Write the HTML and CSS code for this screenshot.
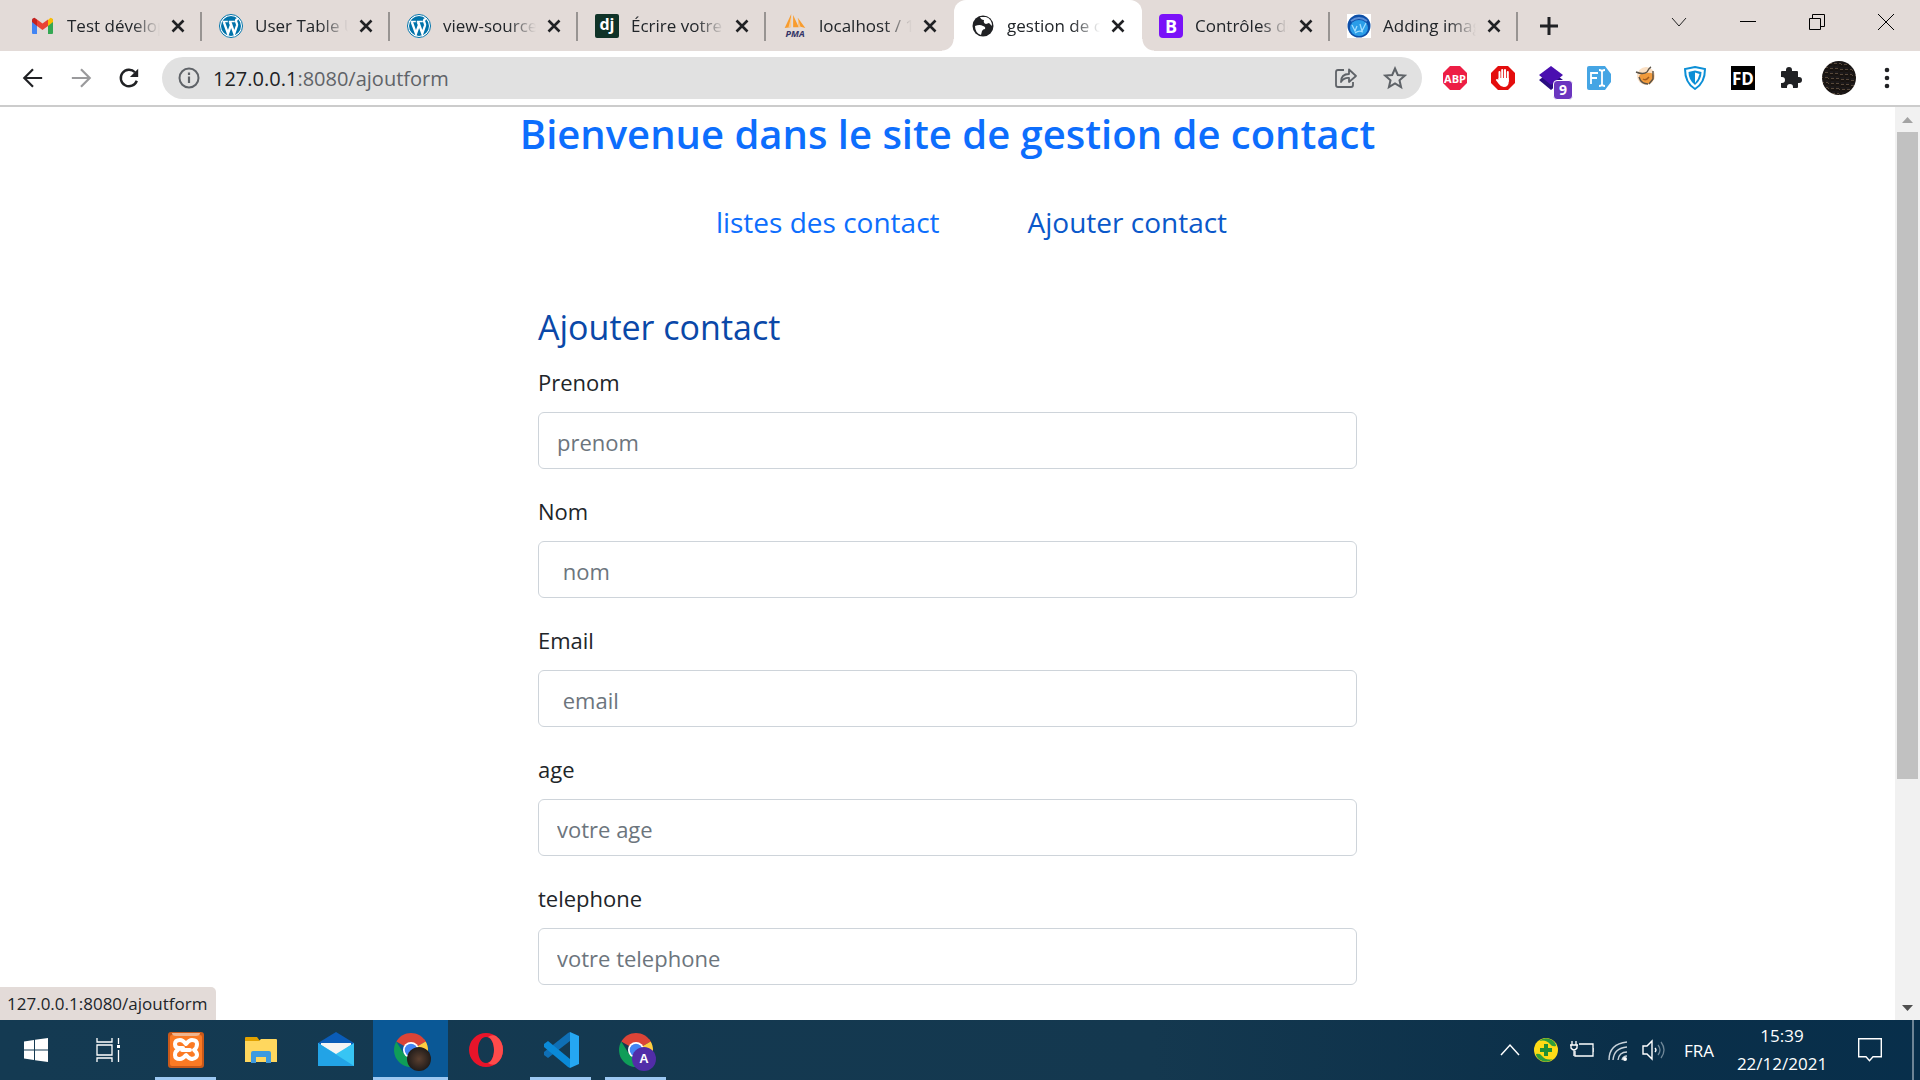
FILE: index.html
```
<!DOCTYPE html>
<html lang="fr">
<head>
<meta charset="utf-8">
<title>gestion de contact</title>
<link rel="stylesheet" href="styles.css">
</head>
<body>
<svg class="defs" aria-hidden="true">
  <symbol id="i-x" viewBox="0 0 14 14"><path d="M1.500 1.500 12.500 12.500M12.500 1.500 1.500 12.500" stroke="#202124" stroke-width="2.600"/></symbol>
  <symbol id="i-wp" viewBox="0 0 24 24"><circle cx="12" cy="12" r="11.500" fill="#fff" stroke="#0073aa"/><circle cx="12" cy="12" r="10" fill="#0073aa"/><path d="M3.600 7.500h5.200M9.800 7.500h6" stroke="#fff" stroke-width="1.300"/><path d="M4.800 8 9 19.500 12 11 10.800 8M11.300 8l4 11.500L18 11.500C18.600 9.500 17 8.500 17 7s1-2 2-1.800" fill="none" stroke="#fff" stroke-width="2.300"/></symbol>
  <symbol id="i-chrome" viewBox="0 0 36 36"><path d="M18 18 3.300 9.500A17 17 0 0 1 32.700 9.500Z" fill="#db4437"/><path d="M18 18 32.700 9.500A17 17 0 0 1 18 35Z" fill="#ffcd40"/><path d="M3.300 9.500A17 17 0 0 0 18 35L25 22 11 22Z" fill="#0f9d58"/><path d="M18 10H33L31 7H14Z" fill="#db4437"/><circle cx="18" cy="18" r="8" fill="#fff"/><circle cx="18" cy="18" r="6.300" fill="#4285f4"/></symbol>
</svg>

<header class="tabbar">
  <div class="tab">
    <svg class="fav" viewBox="0 0 24 24"><path d="M1 5v14q0 1 1 1h4V9z" fill="#4285f4"/><path d="M22 5v14q0 1-1 1h-4V9z" fill="#34a853"/><path d="M17 6v6l5-4V6q0-2-2.500-2.200z" fill="#fbbc04"/><path d="M6 5.500 11.500 9.500 17 5.500V12L11.500 16 6 12z" fill="#ea4335"/><path d="M1 6q0-2 2.500-2.200L6 5.500V12L1 8z" fill="#c5221f"/></svg>
    <span class="title">Test développeur</span><button class="close" aria-label="Fermer"><svg><use href="#i-x"/></svg></button>
  </div>
  <div class="tab">
    <svg class="fav"><use href="#i-wp"/></svg>
    <span class="title">User Table UI</span><button class="close" aria-label="Fermer"><svg><use href="#i-x"/></svg></button>
  </div>
  <div class="tab">
    <svg class="fav"><use href="#i-wp"/></svg>
    <span class="title">view-source:</span><button class="close" aria-label="Fermer"><svg><use href="#i-x"/></svg></button>
  </div>
  <div class="tab">
    <span class="fav fav-dj">dj</span>
    <span class="title">Écrire votre première</span><button class="close" aria-label="Fermer"><svg><use href="#i-x"/></svg></button>
  </div>
  <div class="tab tab-plain">
    <span class="fav fav-pma"><svg viewBox="0 0 24 16"><path d="M8 0 1 15 7 14zM10 1v13l6 0zM15 4l1 9 7 2z" fill="#f89c2e"/><path d="M8 2 5 14h3zM15 4l3 10h-2z" fill="#fbc98a"/></svg>PMA</span>
    <span class="title">localhost / 127</span><button class="close" aria-label="Fermer"><svg><use href="#i-x"/></svg></button>
  </div>
  <div class="tab active">
    <svg class="fav" viewBox="0 0 24 24"><circle cx="12" cy="12" r="10.500" fill="#202124"/><path d="M4 12q5-2 8 0 3 1 2 3-2 0-3 2l-1 4Q4 19 4 12zM9 3q1 3 4 3-1 3 2 4l3-1 3 3q0-7-6-9z" fill="#fff"/></svg>
    <span class="title">gestion de contact</span><button class="close" aria-label="Fermer"><svg><use href="#i-x"/></svg></button>
  </div>
  <div class="tab">
    <span class="fav fav-b">B</span>
    <span class="title">Contrôles de formulaire</span><button class="close" aria-label="Fermer"><svg><use href="#i-x"/></svg></button>
  </div>
  <div class="tab">
    <svg class="fav" viewBox="0 0 24 24"><path d="M0 0h24v24H0z" fill="#fff"/><circle cx="12" cy="12" r="11.500" fill="#0d4fa8"/><ellipse cx="12" cy="14" rx="9" ry="8" fill="#2a9de8"/><path d="M4 7q8-6 16 0" stroke="#5b8fd6" stroke-width="2" fill="none"/><path d="M5 11l3 6 2-5M13 10l2 7 4-8M8 19q4-3 8-1" stroke="#9ddcff" stroke-width="1.300" fill="none"/></svg>
    <span class="title">Adding images</span><button class="close" aria-label="Fermer"><svg><use href="#i-x"/></svg></button>
  </div>
  <button class="newtab" aria-label="Nouvel onglet"><svg viewBox="0 0 18 18"><path d="M9 0v18M0 9h18" stroke="#202124" stroke-width="3"/></svg></button>
  <div class="wincontrols">
    <button aria-label="Rechercher dans les onglets"><svg viewBox="0 0 16 16"><path d="M1 4l7 8 7-8" fill="none" stroke="#222"/></svg></button>
    <button aria-label="Réduire"><svg viewBox="0 0 16 16"><path d="M0 7.500h16" stroke="#000"/></svg></button>
    <button aria-label="Restaurer"><svg viewBox="0 0 16 16"><path d="M.500 4.500h11v11h-11zM3.500 4V.500h12v12H12" fill="none" stroke="#000"/></svg></button>
    <button aria-label="Quitter"><svg viewBox="0 0 16 16"><path d="M0 0l16 16M16 0 0 16" stroke="#000"/></svg></button>
  </div>
</header>

<nav class="toolbar">
  <button class="tool" aria-label="Précédent"><svg viewBox="0 0 24 24"><path d="M22 12H3M12 2.500 2.500 12 12 21.500" fill="none" stroke="#202124" stroke-width="2.400"/></svg></button>
  <button class="tool" aria-label="Suivant"><svg viewBox="0 0 24 24"><path d="M2 12h19M12 2.500 21.500 12 12 21.500" fill="none" stroke="#9a9a9c" stroke-width="2.400"/></svg></button>
  <button class="tool" aria-label="Actualiser"><svg viewBox="0 0 24 24"><path d="M20.500 15A9 9 0 1 1 18.500 5.700" fill="none" stroke="#202124" stroke-width="2.600"/><path d="M22 2v9h-9z" fill="#202124"/></svg></button>
  <div class="urlbar">
    <svg viewBox="0 0 24 24"><circle cx="12" cy="12" r="9.500" fill="none" stroke="#5f6368" stroke-width="2"/><path d="M12 10.500V17M12 6.500V9" stroke="#5f6368" stroke-width="2.200"/></svg>
    <span class="url"><b>127.0.0.1</b>:8080/ajoutform</span>
    <svg viewBox="0 0 24 24"><path d="M10 4H4Q2 4 2 6v13q0 2 2 2h13q2 0 2-2v-3" fill="none" stroke="#5f6368" stroke-width="1.800"/><path d="M7 16q0-8 8-8V3.500l7 6.500-7 6v-4Q10 11.500 7 16z" fill="none" stroke="#5f6368" stroke-width="1.800" stroke-linejoin="round"/></svg>
    <svg viewBox="0 0 24 24"><path d="M12 2.500 14.800 9l7 .600-5.300 4.700 1.600 6.900L12 17.500l-6.100 3.700 1.600-6.900L2.200 9.600l7-.600z" fill="none" stroke="#5f6368" stroke-width="2"/></svg>
  </div>
  <div class="extensions">
    <span class="ext"><svg viewBox="0 0 24 24"><path d="M7 0h10l7 7v10l-7 7H7l-7-7V7z" fill="#ed1e45"/></svg><span class="abp">ABP</span></span>
    <span class="ext"><svg viewBox="0 0 24 24"><path d="M7 0h10l7 7v10l-7 7H7l-7-7V7z" fill="#e40d0d"/><path d="M8.500 6v8M11.200 4v9M14 4v9M16.800 6v9" stroke="#fff" stroke-width="2" stroke-linecap="round"/><path d="M7.500 12h10.300v3q0 6-5 6-3 0-5-3l-3-4q1-2 2.700 0z" fill="#fff"/></svg></span>
    <span class="ext"><svg viewBox="0 0 24 24"><path d="M0 14 12 5l12 9-12 10z" fill="#2a0d80"/><path d="M0 9 12 0l12 9-12 10z" fill="#4a0fb0"/></svg><span class="count">9</span></span>
    <span class="ext"><svg viewBox="0 0 24 24"><path d="M2 0h16l6 8v8l-6 8H2q-2 0-2-2V2q0-2 2-2z" fill="#45a5e4"/><path d="M4 18V7h7M4 12h6M12 4q3 0 3 2v12q0 2-3 2M18 4q-3 0-3 2m0 12q0 2 3 2" fill="none" stroke="#fff" stroke-width="1.800"/></svg></span>
    <span class="ext"><svg viewBox="0 0 24 24"><circle cx="11" cy="10" r="9" fill="#fbe0c4"/><path d="M4 10q3-4 8-3 6-1 7 3 0 6-6 8-7 1-9-8z" fill="#f09a3c"/><path d="M1 6q7 3 11 0 2-4 4-5M4 11q2 7 9 7M18 5v8l-4 5" fill="none" stroke="#5b5348" stroke-width="1.400"/><path d="M8 13q3 2 6-2" fill="none" stroke="#a35b1c" stroke-width="1.400"/></svg></span>
    <span class="ext"><svg viewBox="0 0 24 24"><path d="M12 1 22 3q0 14-10 20Q2 17 2 3z" fill="#fff" stroke="#0c8fd6" stroke-width="2"/><path d="M12 4.500 18.500 6q0 8-6.500 13-6.500-5-6.500-13z" fill="#0c8fd6"/><path d="M12 7v10q-3 -4-4-9z" fill="#0c8fd6"/><path d="M12 6.500 16.500 8q-1 5-4.500 9z" fill="#fff"/></svg></span>
    <span class="ext fd">FD</span>
    <span class="ext"><svg viewBox="0 0 24 24"><path d="M7 4a3 3 0 0 1 6 0v1h5q1 0 1 1v5h1a3 3 0 0 1 0 6h-1v4q0 1-1 1h-4v-1a3 3 0 0 0-6 0v1H3q-1 0-1-1v-4h1a3 3 0 0 0 0-6H2V6q0-1 1-1h4z" fill="#202124"/></svg></span>
    <span class="ext"><span class="avatar"></span></span>
    <span class="ext"><svg viewBox="0 0 24 24"><circle cx="12" cy="4" r="2.300" fill="#202124"/><circle cx="12" cy="12" r="2.300" fill="#202124"/><circle cx="12" cy="20" r="2.300" fill="#202124"/></svg></span>
  </div>
</nav>

<div class="viewport">
  <main class="page">
    <h1>Bienvenue dans le site de gestion de contact</h1>
    <ul class="menu">
      <li><a href="#">listes des contact</a></li>
      <li><a class="hover" href="#">Ajouter contact</a></li>
    </ul>
    <form class="form">
      <h2>Ajouter contact</h2>
      <label for="prenom">Prenom</label>
      <input id="prenom" type="text" placeholder="prenom">
      <label for="nom">Nom</label>
      <input id="nom" type="text" placeholder="&nbsp;nom">
      <label for="email">Email</label>
      <input id="email" type="email" placeholder="&nbsp;email">
      <label for="age">age</label>
      <input id="age" type="text" placeholder="votre age">
      <label for="tel">telephone</label>
      <input id="tel" type="text" placeholder="votre telephone">
      <label for="lieu">lieu de travail</label>
      <input id="lieu" type="text">
    </form>
  </main>
  <div class="scrollbar">
    <svg viewBox="0 0 25 25"><path d="M7 16h11l-5.500-6z" fill="#a3a3a3"/></svg>
    <div class="track"><div class="thumb"></div></div>
    <svg viewBox="0 0 25 25"><path d="M7 10h11l-5.500 6z" fill="#505050"/></svg>
  </div>
  <div class="status">127.0.0.1:8080/ajoutform</div>
</div>

<footer class="taskbar">
  <button class="task sys" aria-label="Démarrer"><svg viewBox="0 0 24 24"><path d="M0 3.500 10 2v9.500H0zM11 1.800 24 0v11.500H11zM0 12.500h10V22L0 20.500zM11 12.500h13V24l-13-1.800z" fill="#fff"/></svg></button>
  <button class="task sys" aria-label="Affichage des tâches"><svg viewBox="0 0 24 24"><path d="M1 0v4h15V0M1 24v-4h15v4M1 7h15v10H1zM22.500 0v6M22.500 12v12" fill="none" stroke="#fff" stroke-width="1.300"/><path d="M21 7h3v3h-3z" fill="#fff"/></svg></button>
  <button class="task running" aria-label="XAMPP"><svg viewBox="0 0 36 36"><rect width="36" height="36" rx="3" fill="#c9591a"/><rect x="2" y="3" width="32" height="31" rx="2" fill="#fb7a24"/><path d="M4 1h28q0 3-4 3H8Q4 4 4 1z" fill="#f0b58e"/><path d="M15 16H11Q7 16 7 12t5-4q3 0 6 4 3-4 6-4 5 0 5 4t-3 6q3 2 3 5t-5 4q-3 0-6-4-3 4-6 4-5 0-5-4 0-4 3-5M14 18h8" fill="none" stroke="#fff" stroke-width="4" stroke-linecap="round" stroke-linejoin="round"/></svg></button>
  <button class="task" aria-label="Explorateur"><svg viewBox="0 0 36 36"><path d="M2 6q0-1 1-1h11l3 4v4H2z" fill="#e2a200"/><path d="M2 9h14l2-2h15q1 0 1 1v22H2z" fill="#ffd75e"/><path d="M8 31V21q0-2 2-2h16q2 0 2 2v10h-5v-6H13v6z" fill="#3d9ae0"/></svg></button>
  <button class="task" aria-label="Courrier"><svg viewBox="0 0 36 36"><path d="M0 11 18 0l18 11v6H0z" fill="#0a5cb8"/><path d="M3 11h30v2L18 24 3 13z" fill="#f4f4f4"/><path d="M0 11l18 11L36 11v23H0z" fill="#37c5f4"/><path d="M0 11l36 23H0z" fill="#22a3e6"/><path d="M3 11h30L18 21z" fill="#f4f4f4"/></svg></button>
  <button class="task current" aria-label="Chrome"><svg><use href="#i-chrome"/></svg><span class="badge photo"></span></button>
  <button class="task" aria-label="Opera"><svg viewBox="0 0 36 36"><path fill-rule="evenodd" d="M18 1a17 17 0 1 1 0 34 17 17 0 0 1 0-34zm0 4c-5 0-8 6-8 13s3 13 8 13 8-6 8-13-3-13-8-13z" fill="#e8142a"/><path d="M20 5c8 3 8 23 0 26q4 3 8 1 7-5 7-14T28 4q-4-2-8 1z" fill="#ff4b4b"/></svg></button>
  <button class="task running" aria-label="Visual Studio Code"><svg viewBox="0 0 36 36"><path d="M27 9 5 26l-4-3v-3L25 1l2-1z" fill="#0f6fb5"/><path d="M27 27 5 9 1 12v3l24 20 2 1z" fill="#0a8ad8"/><path d="M27 0 36 4v28l-9 4z" fill="#25a7f2"/></svg></button>
  <button class="task running" aria-label="Chrome, profil A"><svg><use href="#i-chrome"/></svg><span class="badge">A</span></button>
  <div class="tray">
    <svg viewBox="0 0 24 24"><path d="M3 17l9-10 9 10" fill="none" stroke="#fff" stroke-width="1.500"/></svg>
    <svg viewBox="0 0 24 24"><circle cx="12" cy="12" r="12" fill="#fddb16"/><path d="M5 3Q11-2 18 2q4 3 4 6-4 1-6-2Q12 1 5 3zM19 21q-6 5-13 1-4-3-4-6 4-1 6 2 4 5 11 3z" fill="#2f9e3a"/><path d="M12 6v12M6 12h12" stroke="#1f8f35" stroke-width="4"/></svg>
    <svg viewBox="0 0 24 24"><path d="M9 6h14v12H5v-5" fill="none" stroke="#fff" stroke-width="1.300"/><path d="M24 10v4M2 3v4M6 3v4M0 7h8M1 7v3q3 4 6 0V7M4 12v6" fill="none" stroke="#fff" stroke-width="1.300"/></svg>
    <svg viewBox="0 0 24 24"><path d="M3 22Q3 6 21 4M7 22Q8 10 21 9M12 22q1-8 9-8M16 22q1-4 5-4" fill="none" stroke="#c8d2da" stroke-width="1.400"/><circle cx="19" cy="21" r="2" fill="#fff"/></svg>
    <svg viewBox="0 0 24 24"><path d="M1 8h4l5-5v18l-5-5H1z" fill="none" stroke="#fff" stroke-width="1.400"/><path d="M13 10q2 2 0 4" fill="none" stroke="#fff" stroke-width="1.300"/><path d="M16 7q4 5 0 10M19 4q6 8 0 16" fill="none" stroke="#6f8798" stroke-width="1.300"/></svg>
    <span class="lang">FRA</span>
    <span class="clock">15:39<br>22/12/2021</span>
    <svg class="notif" viewBox="0 0 24 24"><path d="M.700.700h22.600v18H15l-3.500 4-3.500-4H.700z" fill="none" stroke="#fff" stroke-width="1.400"/></svg>
    <span class="desk"></span>
  </div>
</footer>
</body>
</html>
```
FILE: styles.css
```
* { box-sizing: border-box; }

body {
  margin: 0;
  height: 100vh;
  display: flex;
  flex-direction: column;
  overflow: hidden;
  font-family: "Open Sans", "Noto Sans", sans-serif;
  font-size: 22px;
  color: #212529;
  background: #fff;
}

button {
  border: 0;
  padding: 0;
  background: none;
  display: flex;
  align-items: center;
  justify-content: center;
}

svg { display: block; }
.defs { display: none; }

/* tab strip */
.tabbar {
  display: flex;
  flex: none;
  height: 51px;
  padding-left: 14px;
  background: #e3dbd8;
}
.tab {
  position: relative;
  display: flex;
  align-items: center;
  width: 188px;
  padding: 0 17px;
}
.tab::after {
  content: "";
  position: absolute;
  right: 0;
  top: 12px;
  width: 2px;
  height: 29px;
  background: #989492;
}
.tab-plain::after { display: none; }
.tab.active {
  background: #fff;
  border-radius: 12px 12px 0 0;
}
.tab.active::before,
.tab.active::after {
  content: "";
  position: absolute;
  top: auto;
  bottom: 0;
  width: 12px;
  height: 12px;
}
.tab.active::before {
  left: -12px;
  background: radial-gradient(circle at 0 0, #e3dbd8 11px, #fff 12px);
}
.tab.active::after {
  right: -12px;
  background: radial-gradient(circle at 100% 0, #e3dbd8 11px, #fff 12px);
}
.fav {
  flex: none;
  width: 24px;
  height: 24px;
}
.fav-dj, .fav-b {
  border-radius: 2px;
  color: #fff;
  font-weight: 700;
  text-align: center;
}
.fav-dj { background: #103328; font-size: 16px; line-height: 20px; }
.fav-b { background: #7a12f8; border-radius: 4px; font-size: 18px; line-height: 24px; }
.fav-pma {
  font-size: 9px;
  font-style: italic;
  font-weight: 700;
  line-height: 10px;
  text-align: center;
  color: #333366;
}
.fav-pma svg { width: 24px; height: 15px; }
.title {
  width: 93px;
  margin-left: 12px;
  overflow: hidden;
  white-space: nowrap;
  font-size: 17px;
  -webkit-mask-image: linear-gradient(90deg, #000 70%, transparent);
  mask-image: linear-gradient(90deg, #000 70%, transparent);
}
.close { margin-left: 11px; }
.close svg { width: 14px; height: 14px; }
.newtab { width: 62px; }
.newtab svg { width: 18px; height: 18px; }
.wincontrols {
  display: flex;
  margin-left: auto;
  height: 43px;
}
.wincontrols button { width: 69px; }
.wincontrols svg { width: 16px; height: 16px; }

/* address row */
.toolbar {
  display: flex;
  flex: none;
  align-items: center;
  height: 56px;
  padding: 0 9px;
  border-bottom: 2px solid #ccc;
}
.tool { width: 48px; }
.tool svg { width: 22px; height: 22px; }
.urlbar {
  display: flex;
  flex: 1;
  align-items: center;
  height: 42px;
  margin-left: 9px;
  padding: 0 15px;
  border-radius: 21px;
  background: #e1e1e1;
}
.urlbar svg { width: 24px; height: 24px; }
.urlbar svg + svg { margin-left: 25px; }
.url {
  flex: 1;
  margin-left: 12px;
  font-size: 20px;
  color: #5f6368;
}
.url b { font-weight: 400; color: #202124; }
.extensions { display: flex; margin-left: 9px; }
.ext {
  position: relative;
  display: flex;
  align-items: center;
  justify-content: center;
  width: 24px;
  height: 24px;
  margin: 0 12px;
}
.ext svg { width: 24px; height: 24px; }
.abp {
  position: absolute;
  font-size: 11px;
  font-weight: 700;
  color: #fff;
}
.count {
  position: absolute;
  left: 14px;
  top: 14px;
  width: 20px;
  height: 20px;
  border: 1px solid #fff;
  border-radius: 4px;
  background: #6b36bf;
  color: #fff;
  font-size: 14px;
  font-weight: 700;
  line-height: 18px;
  text-align: center;
}
.fd {
  background: #000;
  color: #fff;
  font-size: 17px;
  font-weight: 700;
}
.avatar {
  flex: none;
  width: 34px;
  height: 34px;
  border-radius: 50%;
  background:
    repeating-linear-gradient(85deg, transparent 0 3px, #1a1614 3px 5px),
    repeating-linear-gradient(5deg, #17120f 0 2px, #57483a 2px 3px, #1d1a1c 3px 5px);
}

/* page */
.viewport {
  position: relative;
  display: flex;
  flex: 1;
  min-height: 0;
  overflow: hidden;
}
.page { flex: 1; }
h1 {
  margin: 0;
  font-size: 40px;
  font-weight: 600;
  line-height: 54px;
  text-align: center;
  color: #0d6efd;
}
.menu {
  display: flex;
  justify-content: center;
  gap: 88px;
  margin: 39px 0 0;
  padding: 0 0 0 48px;
  list-style: none;
  font-size: 28px;
  line-height: 44px;
}
.menu a { color: #0d6efd; text-decoration: none; }
.menu a.hover { color: #0a58ca; }
.form {
  max-width: 819px;
  margin: 61px auto 0;
}
.form h2 {
  margin: 0 0 16px;
  font-size: 34px;
  font-weight: 400;
  line-height: 44px;
  color: #0a48a8;
}
.form label {
  display: block;
  margin-bottom: 13px;
  line-height: 34px;
}
.form input {
  display: block;
  width: 100%;
  height: 57px;
  margin-bottom: 25px;
  padding: 2px 18px 0;
  border: 1px solid #ced4da;
  border-radius: 6px;
  font: inherit;
}
.form input::placeholder { color: #6c757d; opacity: 1; }
.scrollbar {
  display: flex;
  flex-direction: column;
  width: 25px;
  background: #f1f1f1;
}
.scrollbar svg { width: 25px; height: 25px; }
.track { flex: 1; padding: 0 2px; }
.thumb { height: 75%; background: #c1c1c1; }
.status {
  position: absolute;
  left: 0;
  bottom: 0;
  width: 216px;
  padding: 0 7px;
  border-top-right-radius: 5px;
  background: #e3dbd8;
  font-size: 17px;
  line-height: 33px;
}

/* taskbar */
.taskbar {
  display: flex;
  flex: none;
  height: 60px;
  background: linear-gradient(90deg, #143a52, #14384f 60%, #0a2f49 85%, #082f4b);
  color: #fff;
}
.task {
  position: relative;
  width: 75px;
}
.task svg { width: 36px; height: 36px; }
.task.sys { width: 72px; }
.task.sys + .task:not(.sys) { margin-left: 4px; }
.task.sys svg { width: 24px; height: 24px; }
.task.running::after {
  content: "";
  position: absolute;
  bottom: 0;
  width: 61px;
  height: 3px;
  background: #9cc8f2;
}
.task.current { background: #0a5896; border-bottom: 3px solid #9cc8f2; padding-top: 3px; }
.badge {
  position: absolute;
  left: 34px;
  top: 27px;
  width: 24px;
  height: 24px;
  border-radius: 50%;
  background: #512da8;
  color: #fff;
  font-size: 13px;
  font-weight: 600;
  line-height: 24px;
}
.badge.photo { background: radial-gradient(circle, #5b4030, #1d1a19 75%); }
.tray {
  display: flex;
  align-items: center;
  margin-left: auto;
  font-size: 17px;
}
.tray svg { width: 24px; height: 24px; margin: 0 6px; }
.lang { width: 54px; text-align: center; }
.clock { width: 112px; text-align: center; line-height: 28px; }
.tray .notif { margin: 0 30px 0 20px; }
.desk { width: 8px; height: 60px; border-left: 2px solid #6d8496; }
```
